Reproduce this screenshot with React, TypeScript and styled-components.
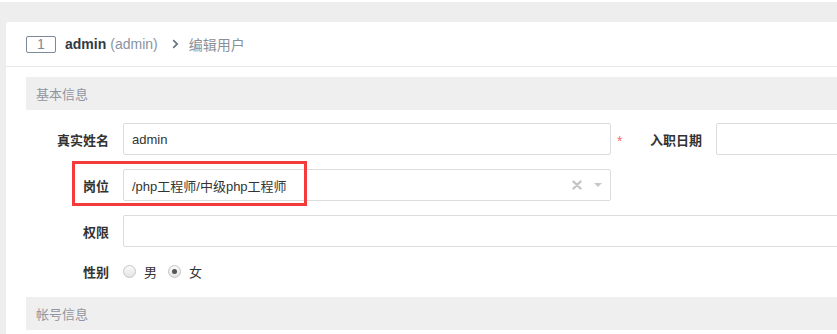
import React from "react";
import styled, { createGlobalStyle } from "styled-components";

const Global = createGlobalStyle`
  html, body { margin: 0; padding: 0; overflow: hidden; background: #fff; }
  body {
    font-family: "Liberation Sans", "Noto Sans CJK SC", sans-serif;
    font-size: 13px;
    color: #333;
  }
  * { box-sizing: border-box; }
`;

const Page = styled.div`
  margin-top: 2px;
  background: #eeeeee;
  padding: 20px 0 0 6px;
  width: 1100px;
  height: 332px;
  overflow: hidden;
`;

const Card = styled.div`
  background: #fff;
  border-radius: 3px 0 0 0;
  width: 1000px;
  height: 100%;
`;

const Header = styled.div`
  height: 45px;
  display: flex;
  align-items: center;
  padding: 0 20px;
  border-bottom: 1px solid #e8e8e8;
  font-size: 14px;
`;

const NumBox = styled.span`
  width: 30px;
  height: 17px;
  border: 1px solid #7d8898;
  border-radius: 2px;
  color: #7d8898;
  font-size: 14px;
  line-height: 15px;
  text-align: center;
  margin-right: 9px;
`;

const UserName = styled.b`
  font-weight: bold;
  color: #333a45;
`;

const Login = styled.span`
  color: #8a93a2;
  margin-left: 4px;
`;

const Crumb = styled.span`
  color: #8a909a;
  margin-left: 10px;
`;

const Chevron = styled.svg`
  margin-left: 14px;
  width: 7px;
  height: 10px;
`;

const Body = styled.div`
  padding: 10px 20px 0;
`;

const SectionBar = styled.div<{ $mb?: number }>`
  height: 33px;
  background: #efefef;
  color: #8f96a2;
  padding-left: 10px;
  display: flex;
  align-items: center;
  font-size: 13px;
  margin-bottom: ${(p) => p.$mb ?? 0}px;
`;

const Row = styled.div<{ $h?: number; $mb?: number }>`
  position: relative;
  display: flex;
  align-items: center;
  height: ${(p) => p.$h ?? 32}px;
  margin-bottom: ${(p) => p.$mb ?? 14}px;
`;

const Label = styled.label<{ $w?: number }>`
  width: ${(p) => p.$w ?? 97}px;
  flex: none;
  text-align: right;
  padding-right: 14px;
  font-weight: bold;
  color: #333;
  font-size: 13px;
`;

const Input = styled.div<{ $w?: number }>`
  height: 32px;
  ${(p) => (p.$w ? `width: ${p.$w}px; flex: none;` : "flex: 1;")}
  border: 1px solid #dcdcdc;
  border-radius: 2px;
  display: flex;
  align-items: center;
  padding: 0 8px;
  color: #333;
  background: #fff;
  font-size: 13px;
`;

const Value = styled.span`
  flex: 1;
  white-space: nowrap;
`;

const Required = styled.span`
  color: #f76b6b;
  margin-left: 6px;
  width: 6px;
  font-size: 14px;
  line-height: 14px;
  padding-top: 3px;
`;

const ClearIcon = styled.svg`
  width: 10px;
  height: 10px;
  margin-right: 12px;
`;

const Caret = styled.span`
  width: 0;
  height: 0;
  border-left: 4px solid transparent;
  border-right: 4px solid transparent;
  border-top: 4px solid #c8c8c8;
`;

const Highlight = styled.div`
  position: absolute;
  left: 46px;
  top: -8px;
  width: 235px;
  height: 45px;
  border: 3px solid #f33b3b;
  pointer-events: none;
`;

const RadioGroup = styled.div`
  display: flex;
  align-items: center;
`;

const Radio = styled.span<{ $on?: boolean }>`
  width: 13px;
  height: 13px;
  border-radius: 50%;
  border: 1px solid #c4c4c4;
  background: linear-gradient(#fafafa, #e4e4e4);
  display: inline-flex;
  align-items: center;
  justify-content: center;
  margin-right: 8px;
  &::after {
    content: "";
    width: 5px;
    height: 5px;
    border-radius: 50%;
    background: ${(p) => (p.$on ? "#555" : "transparent")};
  }
`;

const RadioText = styled.span`
  color: #333;
  margin-right: 11px;
  font-size: 13px;
`;

export default function App() {
  return (
    <>
      <Global />
      <Page>
        <Card>
          <Header>
            <NumBox>1</NumBox>
            <UserName>admin</UserName>
            <Login>(admin)</Login>
            <Chevron viewBox="0 0 7 10">
              <path d="M1.2 1.2 L5.2 5 L1.2 8.8" fill="none" stroke="#6f7888" strokeWidth="1.8" />
            </Chevron>
            <Crumb>编辑用户</Crumb>
          </Header>
          <Body>
            <SectionBar $mb={13}>基本信息</SectionBar>
            <Row>
              <Label>真实姓名</Label>
              <Input $w={488}>
                <Value>admin</Value>
              </Input>
              <Required>*</Required>
              <Label $w={93}>入职日期</Label>
              <Input />
            </Row>
            <Row>
              <Label>岗位</Label>
              <Input $w={488}>
                <Value>/php工程师/中级php工程师</Value>
                <ClearIcon viewBox="0 0 10 10">
                  <path d="M1.5 1.5 L8.5 8.5 M8.5 1.5 L1.5 8.5" stroke="#c4c4c4" strokeWidth="2.4" strokeLinecap="round" />
                </ClearIcon>
                <Caret />
              </Input>
              <Highlight />
            </Row>
            <Row>
              <Label>权限</Label>
              <Input />
            </Row>
            <Row $h={20} $mb={16}>
              <Label>性别</Label>
              <RadioGroup>
                <Radio />
                <RadioText>男</RadioText>
                <Radio $on />
                <RadioText>女</RadioText>
              </RadioGroup>
            </Row>
            <SectionBar>帐号信息</SectionBar>
          </Body>
        </Card>
      </Page>
    </>
  );
}
